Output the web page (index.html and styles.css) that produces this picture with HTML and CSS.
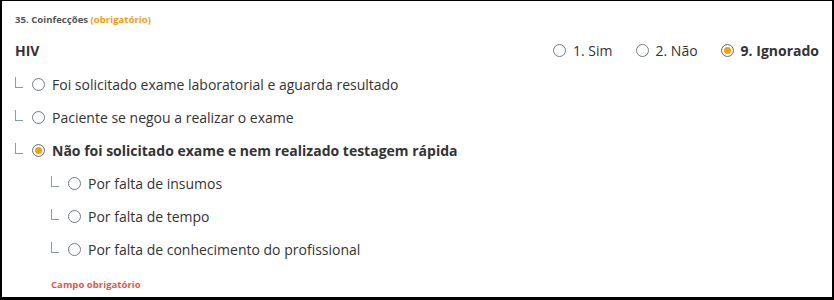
FILE: index.html
```html
<!DOCTYPE html>
<html lang="pt-br">
<head>
  <meta charset="UTF-8" />
  <meta name="viewport" content="width=device-width, initial-scale=1.0" />
  <title>Coinfecções</title>
  <link rel="stylesheet" href="styles.css">
</head>
<body>
  <div class="panel">
    <div class="field-label">35. Coinfecções <span class="required">(obrigatório)</span></div>

    <div class="question">
      <div class="question-title">HIV</div>
      <div class="options">
        <label class="option"><span class="radio"></span>1. Sim</label>
        <label class="option"><span class="radio"></span>2. Não</label>
        <label class="option checked"><span class="radio"></span>9. Ignorado</label>
      </div>
    </div>

    <div class="tree">
      <div class="tree-row">
        <span class="branch"></span><span class="radio"></span>
        <span class="tree-text">Foi solicitado exame laboratorial e aguarda resultado</span>
      </div>
      <div class="tree-row">
        <span class="branch"></span><span class="radio"></span>
        <span class="tree-text">Paciente se negou a realizar o exame</span>
      </div>
      <div class="tree-row checked">
        <span class="branch"></span><span class="radio"></span>
        <span class="tree-text">Não foi solicitado exame e nem realizado testagem rápida</span>
      </div>
      <div class="tree-row sub">
        <span class="branch"></span><span class="radio"></span>
        <span class="tree-text">Por falta de insumos</span>
      </div>
      <div class="tree-row sub">
        <span class="branch"></span><span class="radio"></span>
        <span class="tree-text">Por falta de tempo</span>
      </div>
      <div class="tree-row sub">
        <span class="branch"></span><span class="radio"></span>
        <span class="tree-text">Por falta de conhecimento do profissional</span>
      </div>
    </div>

    <div class="error">Campo obrigatório</div>
  </div>
</body>
</html>
```

FILE: styles.css
```css
body {
  margin: 0;
  font-family: "Open Sans", Arial, sans-serif;
  color: #333;
  background-color: #fff;
}

.panel {
  box-sizing: border-box;
  width: 834px;
  height: 300px;
  border: solid #000;
  border-width: 1px 2px 3px 2px;
  padding: 12px 13px 0 13px;
}

.field-label {
  font-size: 9.6px;
  font-weight: bold;
  line-height: 14px;
  color: #555;
}

.required {
  color: #f39c12;
}

.question {
  display: flex;
  align-items: center;
  justify-content: space-between;
  height: 20px;
  margin-top: 13px;
}

.question-title {
  font-size: 14px;
  font-weight: bold;
  color: #333;
}

.options {
  display: flex;
  align-items: center;
  gap: 23px;
}

.option {
  display: flex;
  align-items: center;
  gap: 7px;
  font-size: 14px;
  cursor: pointer;
}

.option.checked {
  font-weight: bold;
}

.radio {
  box-sizing: border-box;
  width: 13px;
  height: 13px;
  border: 1px solid #6f7c88;
  border-radius: 50%;
  background-color: #fff;
  flex-shrink: 0;
}

.checked .radio {
  background-color: #f5a00a;
  box-shadow: inset 0 0 0 2px #fff;
}

.tree {
  margin-top: 8px;
}

.tree-row {
  display: flex;
  align-items: center;
  height: 33px;
  font-size: 14px;
}

.tree-row.checked {
  font-weight: bold;
}

.tree-row.sub {
  padding-left: 36px;
}

.branch {
  box-sizing: border-box;
  width: 8px;
  height: 11px;
  margin: -5px 9px 0 0;
  border-left: 1px solid #8a9aa6;
  border-bottom: 1px solid #8a9aa6;
}

.tree-text {
  margin-left: 7px;
}

.error {
  margin-top: 12px;
  padding-left: 36px;
  font-size: 9.6px;
  font-weight: bold;
  line-height: 14px;
  color: #e0584c;
}
```
